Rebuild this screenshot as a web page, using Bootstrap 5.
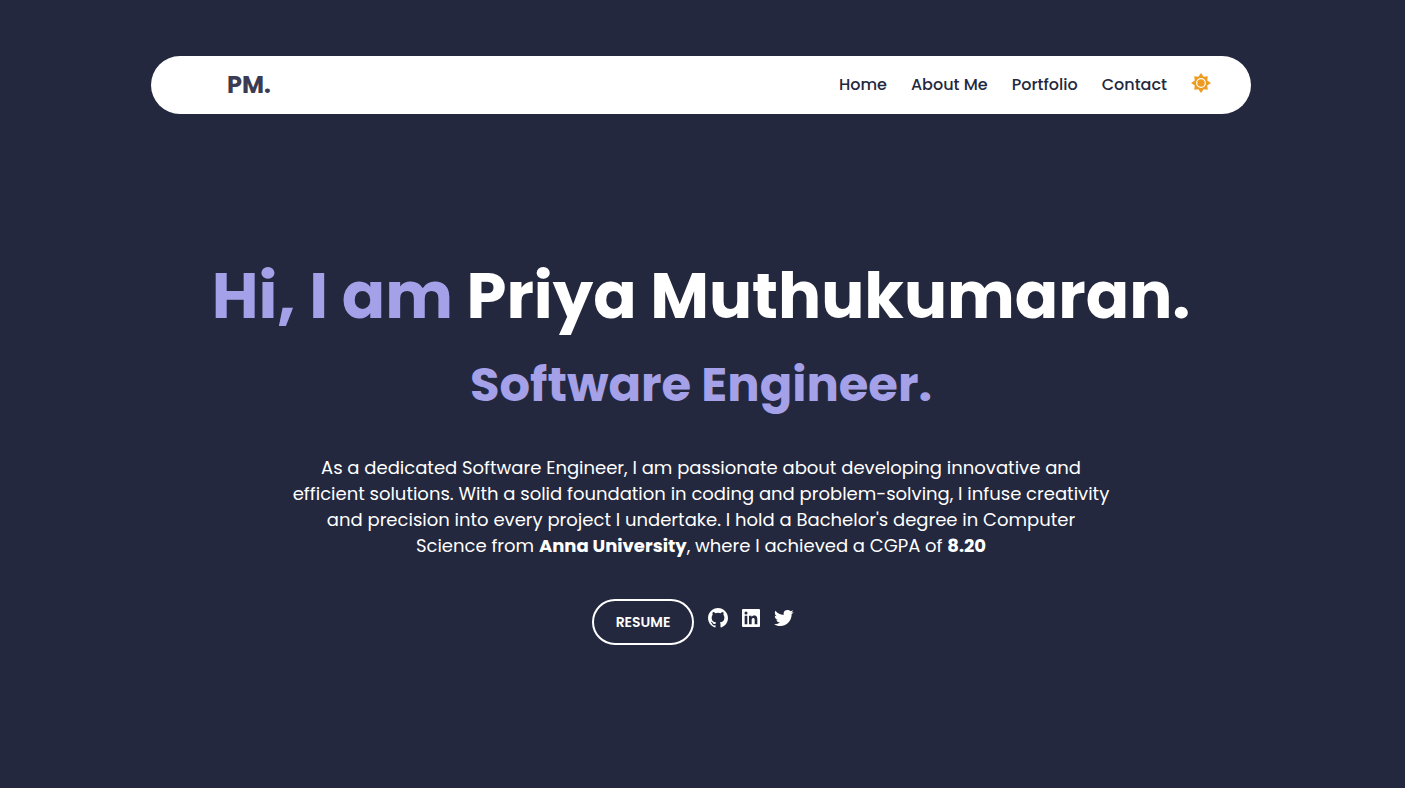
<!DOCTYPE html>
<html lang="en">
<head>
<meta charset="utf-8">
<meta name="viewport" content="width=device-width, initial-scale=1">
<title>Priya Muthukumaran</title>
<link rel="stylesheet" href="https://cdn.jsdelivr.net/npm/bootstrap@5.3.0/dist/css/bootstrap.min.css">
<style>
  body { background: #24283e; color: #fff; font-family: Poppins, Inter, sans-serif; padding-right: 3px; }
  .site-header { padding-top: 56px; }
  .site-nav { max-width: 1100px; min-height: 58px; padding: 0 40px 0 76px; }
  .brand { color: #3b3b54; font-size: 24px; line-height: 30px; font-weight: 700; }
  .site-nav .nav-link { color: #24283e; font-size: 16px; line-height: 24px; font-weight: 500; padding: 0; }
  .nav-items { gap: 8px 24px; }
  .theme-toggle { width: 20px; height: 20px; }
  .hero { padding: 140px 16px 64px; }
  .hero-title { font-size: 64px; line-height: 84px; font-weight: 700; margin: 0; }
  .hero-role { font-size: 48px; line-height: 76px; font-weight: 700; margin: 9px 0 32px; }
  .accent { color: #a5a1e8; }
  .hero-text { max-width: 820px; font-size: 18px; line-height: 26px; margin-bottom: 40px; }
  .resume { width: 102px; height: 46px; border: 2px solid #fff; color: #fff; font-size: 14px; font-weight: 600; padding: 0; }
  .resume:hover { background: #fff; color: #24283e; }
  .social { gap: 13px; padding: 9px 16px 0 14px; }
  .social svg, .theme-toggle svg { display: block; width: 20px; height: 20px; }
  @media (max-width: 767px) {
    .site-nav { padding: 12px 24px; }
    .hero { padding-top: 64px; }
    .hero-title { font-size: 40px; line-height: 52px; }
    .hero-role { font-size: 32px; line-height: 44px; }
    .hero-text br { display: none; }
  }
</style>
</head>
<body>
<header class="site-header">
  <nav class="site-nav bg-white rounded-pill mx-auto d-flex flex-wrap align-items-center justify-content-between" aria-label="Main">
    <a class="brand text-decoration-none" href="#home">PM.</a>
    <div class="nav-items d-flex flex-wrap align-items-center">
      <a class="nav-link" href="#home">Home</a>
      <a class="nav-link" href="#about">About Me</a>
      <a class="nav-link" href="#portfolio">Portfolio</a>
      <a class="nav-link" href="#contact">Contact</a>
      <button type="button" class="theme-toggle btn p-0 border-0 mb-1" aria-label="Switch theme">
        <svg viewBox="0 0 20 20" aria-hidden="true">
          <path fill="#ed9b21" d="M10 0L12.6 3.8L16.8 3.2L16.2 7.4L20 10L16.2 12.6L16.8 16.8L12.6 16.2L10 20L7.4 16.2L3.2 16.8L3.8 12.6L0 10L3.8 7.4L3.2 3.2L7.4 3.8z"/>
          <circle cx="10" cy="10" r="4.3" fill="#ed9b21" stroke="#fff" stroke-width="1.2"/>
        </svg>
      </button>
    </div>
  </nav>
</header>
<main class="hero text-center" id="home">
  <h1 class="hero-title"><span class="accent">Hi, I am</span> Priya Muthukumaran.</h1>
  <h2 class="hero-role accent">Software Engineer.</h2>
  <p class="hero-text mx-auto">As a dedicated Software Engineer, I am passionate about developing innovative and<br>
    efficient solutions. With a solid foundation in coding and problem-solving, I infuse creativity<br>
    and precision into every project I undertake. I hold a Bachelor's degree in Computer<br>
    Science from <strong>Anna University</strong>, where I achieved a CGPA of <strong>8.20</strong></p>
  <div class="d-flex justify-content-center align-items-start">
    <button type="button" class="resume btn rounded-pill">RESUME</button>
    <div class="social d-flex">
      <a class="text-white" href="#github" aria-label="GitHub"><svg viewBox="2 2 20 20" fill="currentColor" aria-hidden="true"><path d="M12.026 2c-5.509 0-9.974 4.465-9.974 9.974 0 4.406 2.857 8.145 6.821 9.465.499.09.679-.217.679-.481 0-.237-.008-.865-.011-1.696-2.775.602-3.361-1.338-3.361-1.338-.452-1.152-1.107-1.459-1.107-1.459-.905-.619.069-.605.069-.605 1.002.07 1.527 1.028 1.527 1.028.89 1.524 2.336 1.084 2.902.829.091-.645.351-1.085.635-1.334-2.214-.251-4.542-1.107-4.542-4.93 0-1.087.389-1.979 1.024-2.675-.101-.253-.446-1.268.099-2.64 0 0 .837-.269 2.742 1.021a9.582 9.582 0 0 1 2.496-.336 9.554 9.554 0 0 1 2.496.336c1.906-1.291 2.742-1.021 2.742-1.021.545 1.372.203 2.387.099 2.64.64.696 1.024 1.587 1.024 2.675 0 3.833-2.33 4.675-4.552 4.922.355.308.675.916.675 1.846 0 1.334-.012 2.41-.012 2.737 0 .267.178.577.687.479C19.146 20.115 22 16.379 22 11.974 22 6.465 17.535 2 12.026 2z"/></svg></a>
      <a class="text-white" href="#linkedin" aria-label="LinkedIn"><svg viewBox="2 2 20 20" fill="currentColor" aria-hidden="true"><path d="M20 3H4a1 1 0 0 0-1 1v16a1 1 0 0 0 1 1h16a1 1 0 0 0 1-1V4a1 1 0 0 0-1-1zM8.339 18.337H5.667v-8.59h2.672v8.59zM7.003 8.574a1.548 1.548 0 1 1 0-3.096 1.548 1.548 0 0 1 0 3.096zm11.335 9.763h-2.669V14.16c0-.996-.018-2.277-1.388-2.277-1.39 0-1.601 1.086-1.601 2.207v4.248h-2.667v-8.59h2.56v1.174h.037c.355-.675 1.227-1.387 2.524-1.387 2.704 0 3.203 1.778 3.203 4.092v4.71z"/></svg></a>
      <a class="text-white" href="#twitter" aria-label="Twitter"><svg viewBox="2 2 20 20" fill="currentColor" aria-hidden="true"><path d="M19.633 7.997c.013.175.013.349.013.523 0 5.325-4.053 11.461-11.46 11.461-2.282 0-4.402-.661-6.186-1.809.324.037.636.05.973.05a8.07 8.07 0 0 0 5.001-1.721 4.036 4.036 0 0 1-3.767-2.793c.249.037.499.062.761.062.361 0 .724-.05 1.061-.137a4.027 4.027 0 0 1-3.23-3.953v-.05c.537.299 1.16.486 1.82.511a4.022 4.022 0 0 1-1.796-3.354c0-.748.199-1.434.548-2.032a11.457 11.457 0 0 0 8.306 4.215c-.062-.3-.1-.611-.1-.923a4.026 4.026 0 0 1 4.028-4.028c1.16 0 2.207.486 2.943 1.272a7.957 7.957 0 0 0 2.556-.973 4.02 4.02 0 0 1-1.771 2.22 8.073 8.073 0 0 0 2.319-.624 8.645 8.645 0 0 1-2.019 2.083z"/></svg></a>
    </div>
  </div>
</main>
<script src="https://cdn.jsdelivr.net/npm/bootstrap@5.3.0/dist/js/bootstrap.bundle.min.js"></script>
</body>
</html>
